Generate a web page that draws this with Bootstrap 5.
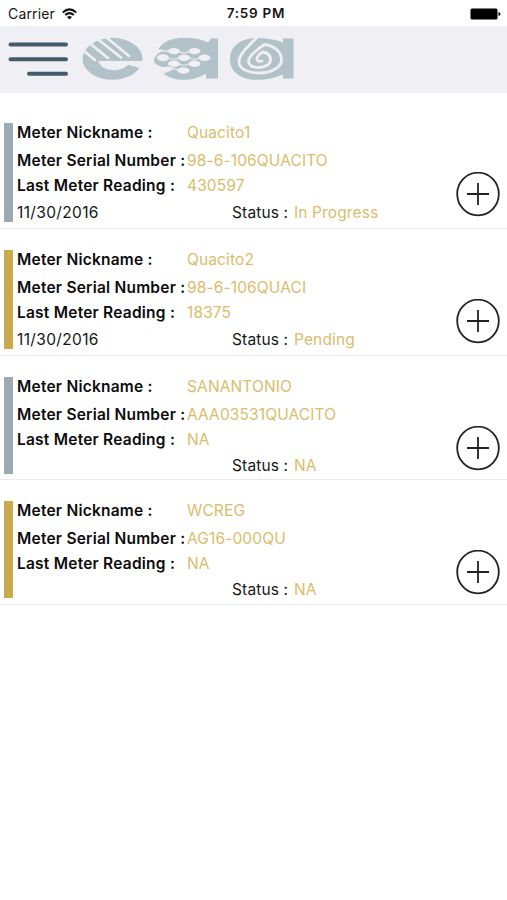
<!DOCTYPE html>
<html lang="en">
<head>
<meta charset="utf-8">
<meta name="viewport" content="width=device-width, initial-scale=1">
<title>Meters</title>
<link href="https://cdn.jsdelivr.net/npm/bootstrap@5.3.0/dist/css/bootstrap.min.css" rel="stylesheet">
<style>
body{font-family:Inter,"Liberation Sans",sans-serif;font-size:15.5px;color:#161616;background:#fff}
svg{display:block}
.status-strip{height:26px;padding:1px 6px 0 8px;font-size:14px;letter-spacing:.15px}
.status-strip .side{flex:1 1 0;gap:7px}
.clock{font-size:13.5px;font-weight:600;letter-spacing:.75px;margin-left:3px}
.topbar{height:67px;background:#efeff4;padding:0 8px}
.meters{padding-top:9px}
.meter{height:127px;padding:21px 7px 0 4px;border-bottom:1px solid #ebebed}
.meter.short{height:124.4px}
.stripe{width:9px;height:99px;background:#9caab4;margin-right:4px}
.short .stripe{height:97px}
.stripe.gold{background:#cba94f}
.line{height:26px;line-height:28px;white-space:nowrap}
.line.first{height:28px;margin-top:-4px}
.line.third{line-height:26px}
.short .line.last{line-height:25px}
.lbl{width:170px;font-weight:600;color:#0c0c0c;letter-spacing:.23px}
.day{width:215px;letter-spacing:.35px}
.stat{width:62px;letter-spacing:.15px}
.val{color:#d9bd6c;letter-spacing:.13px}
.add{width:44px;margin-top:49px}
</style>
</head>
<body>
<div class="status-strip d-flex align-items-center">
  <div class="side d-flex align-items-center">
    <span>Carrier</span>
    <svg width="15" height="12" viewBox="0 0 15 12" fill="none" stroke="#111" stroke-width="2"><path d="M.8 4.4Q7.5-1.6 14.2 4.4M3.2 7Q7.5 3.2 11.8 7"/><path d="M5 8.9Q7.5 6.9 10 8.9L7.5 11.6z" fill="#111" stroke="none"/></svg>
  </div>
  <span class="clock">7:59 PM</span>
  <div class="side d-flex justify-content-end">
    <svg width="31" height="12" viewBox="0 0 31 12"><rect x=".5" y=".5" width="27" height="11" rx="1.5"/><path d="M28.5 4q2 .3 2 2t-2 2z"/></svg>
  </div>
</div>
<header class="topbar d-flex align-items-center">
  <button class="btn p-0 border-0" aria-label="Menu">
    <svg width="61" height="36" viewBox="0 0 61 36" stroke="#425b6b" stroke-width="4" stroke-linecap="round"><path d="M2.500 2.500H58M2.500 17.200H58M21 31.800H58"/></svg>
  </button>
  <svg class="ms-2" width="220" height="50" viewBox="77 34.500 220 50" fill="#b2c2c9" role="img" aria-label="eaa">
    <ellipse cx="112.500" cy="58.300" rx="30" ry="21"/>
    <path fill="#efeff4" d="M98.200 60.500H144V70L141.500 68 128 64.200Q122 70.500 111.500 69.500 100 68 98.200 60.500z"/>
    <g stroke="#efeff4" stroke-width="2.600" stroke-linecap="round"><path d="M106 36.500L129 55.500M97.500 38.500L121 57M90 43L108 57.500M84 50.500L95 59.500"/></g>
    <path d="M211 38H218V78H206V73Q197 79.300 183 79.300 171 79.300 164 73.500L161 70Q169 70 174 67L155 66Q153 58 156 54 161 37.300 185 37.300 199 37.300 208 42z"/>
    <g fill="#efeff4"><path d="M153 47Q160 50 165 49L158 53 153 59zM153 61Q158 66 165 67 169 69 174 69L164 73 153 70z"/>
      <ellipse cx="174" cy="50.600" rx="6" ry="3.100"/><ellipse cx="194.500" cy="50.600" rx="6" ry="3.100"/><ellipse cx="163" cy="57.200" rx="6" ry="3.500"/><ellipse cx="184" cy="57.200" rx="6" ry="3.200"/><ellipse cx="204.500" cy="57.200" rx="6" ry="3.200"/><ellipse cx="174" cy="63.300" rx="6" ry="3.200"/><ellipse cx="194.500" cy="63.300" rx="6" ry="3.200"/><ellipse cx="183.500" cy="70" rx="6" ry="3.200"/></g>
    <g fill="none" stroke="#efeff4" stroke-width="1.100"><path d="M160 49.500Q165 52 169 50M179 51Q184 54 189 51M168 57.500Q173 60 179 57.500M189 57.500Q194 60 199 57.500M179 63.500Q184 66 189 63.500M167 66L178 69.500"/></g>
    <path d="M283 38H293.500V78H283V74Q271 79.300 257 79.300C240 79.300 230 71 230 58.500S241 37.500 257 37.500Q272 37.500 283 42z"/>
    <path d="M258 36C250 44 238.500 54 239 61.500 239.500 69 249 72.500 259 72.500 271 72.500 281.500 67 281.500 59.500 281.500 51 274 45 264.500 44 257 49 248.500 56 248.500 61 249 65.500 254 67 259.500 67 266 66.500 271 63.500 270.500 58.500 270 54 266 52 263 51.500 259 54 256.500 57 257 59 258 61 261 61.500 263 60" fill="none" stroke="#efeff4" stroke-width="2.800"/>
  </svg>
</header>
<main class="meters">
  <article class="meter d-flex align-items-start">
    <div class="stripe"></div>
    <div class="flex-grow-1">
      <div class="line first d-flex"><span class="lbl">Meter Nickname :</span><span class="val">Quacito1</span></div>
      <div class="line d-flex"><span class="lbl">Meter Serial Number :</span><span class="val">98-6-106QUACITO</span></div>
      <div class="line third d-flex"><span class="lbl">Last Meter Reading :</span><span class="val">430597</span></div>
      <div class="line last d-flex"><span class="day">11/30/2016</span><span class="stat">Status :</span><span class="val">In Progress</span></div>
    </div>
    <button class="btn p-0 border-0 add" aria-label="Add reading"><svg width="44" height="45" viewBox="0 0 44 45" fill="none" stroke="#222" stroke-width="1.800"><ellipse cx="22" cy="22" rx="20.800" ry="21.300"/><path d="M11 22H33M22 11V33"/></svg></button>
  </article>
  <article class="meter d-flex align-items-start">
    <div class="stripe gold"></div>
    <div class="flex-grow-1">
      <div class="line first d-flex"><span class="lbl">Meter Nickname :</span><span class="val">Quacito2</span></div>
      <div class="line d-flex"><span class="lbl">Meter Serial Number :</span><span class="val">98-6-106QUACI</span></div>
      <div class="line third d-flex"><span class="lbl">Last Meter Reading :</span><span class="val">18375</span></div>
      <div class="line last d-flex"><span class="day">11/30/2016</span><span class="stat">Status :</span><span class="val">Pending</span></div>
    </div>
    <button class="btn p-0 border-0 add" aria-label="Add reading"><svg width="44" height="45" viewBox="0 0 44 45" fill="none" stroke="#222" stroke-width="1.800"><ellipse cx="22" cy="22" rx="20.800" ry="21.300"/><path d="M11 22H33M22 11V33"/></svg></button>
  </article>
  <article class="meter short d-flex align-items-start">
    <div class="stripe"></div>
    <div class="flex-grow-1">
      <div class="line first d-flex"><span class="lbl">Meter Nickname :</span><span class="val">SANANTONIO</span></div>
      <div class="line d-flex"><span class="lbl">Meter Serial Number :</span><span class="val">AAA03531QUACITO</span></div>
      <div class="line third d-flex"><span class="lbl">Last Meter Reading :</span><span class="val">NA</span></div>
      <div class="line last d-flex"><span class="day"></span><span class="stat">Status :</span><span class="val">NA</span></div>
    </div>
    <button class="btn p-0 border-0 add" aria-label="Add reading"><svg width="44" height="45" viewBox="0 0 44 45" fill="none" stroke="#222" stroke-width="1.800"><ellipse cx="22" cy="22" rx="20.800" ry="21.300"/><path d="M11 22H33M22 11V33"/></svg></button>
  </article>
  <article class="meter short d-flex align-items-start">
    <div class="stripe gold"></div>
    <div class="flex-grow-1">
      <div class="line first d-flex"><span class="lbl">Meter Nickname :</span><span class="val">WCREG</span></div>
      <div class="line d-flex"><span class="lbl">Meter Serial Number :</span><span class="val">AG16-000QU</span></div>
      <div class="line third d-flex"><span class="lbl">Last Meter Reading :</span><span class="val">NA</span></div>
      <div class="line last d-flex"><span class="day"></span><span class="stat">Status :</span><span class="val">NA</span></div>
    </div>
    <button class="btn p-0 border-0 add" aria-label="Add reading"><svg width="44" height="45" viewBox="0 0 44 45" fill="none" stroke="#222" stroke-width="1.800"><ellipse cx="22" cy="22" rx="20.800" ry="21.300"/><path d="M11 22H33M22 11V33"/></svg></button>
  </article>
</main>
<script src="https://cdn.jsdelivr.net/npm/bootstrap@5.3.0/dist/js/bootstrap.bundle.min.js"></script>
</body>
</html>
